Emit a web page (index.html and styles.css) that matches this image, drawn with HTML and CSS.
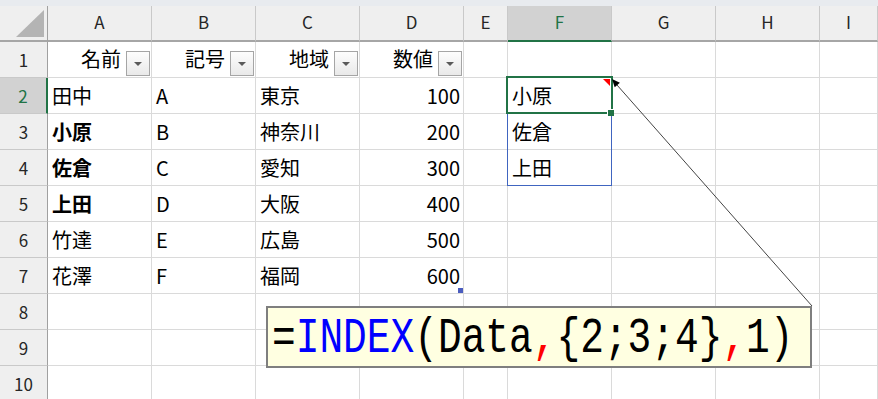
FILE: index.html
```html
<!DOCTYPE html>
<html lang="ja">
<head>
    <meta charset="UTF-8">
    <meta name="viewport" content="width=device-width, initial-scale=1.0">
    <title>INDEX スピル</title>
    <link rel="stylesheet" href="styles.css">
</head>
<body>
    <div class="topbar"></div>
    <div class="sheet">
        <div class="grid">
            <!-- column headers -->
            <div class="corner"><span class="corner-tri"></span></div>
            <div class="colhead">A</div>
            <div class="colhead">B</div>
            <div class="colhead">C</div>
            <div class="colhead">D</div>
            <div class="colhead">E</div>
            <div class="colhead selected">F</div>
            <div class="colhead">G</div>
            <div class="colhead">H</div>
            <div class="colhead">I</div>

            <!-- row 1: table headers with filter buttons -->
            <div class="rowhead">1</div>
            <div class="cell th"><span>名前</span><span class="filter"></span></div>
            <div class="cell th"><span>記号</span><span class="filter"></span></div>
            <div class="cell th"><span>地域</span><span class="filter"></span></div>
            <div class="cell th"><span>数値</span><span class="filter"></span></div>
            <div class="cell"></div>
            <div class="cell"></div>
            <div class="cell"></div>
            <div class="cell"></div>
            <div class="cell"></div>

            <div class="rowhead selected">2</div>
            <div class="cell">田中</div>
            <div class="cell">A</div>
            <div class="cell">東京</div>
            <div class="cell num">100</div>
            <div class="cell"></div>
            <div class="cell">小原</div>
            <div class="cell"></div>
            <div class="cell"></div>
            <div class="cell"></div>

            <div class="rowhead">3</div>
            <div class="cell bold">小原</div>
            <div class="cell">B</div>
            <div class="cell">神奈川</div>
            <div class="cell num">200</div>
            <div class="cell"></div>
            <div class="cell">佐倉</div>
            <div class="cell"></div>
            <div class="cell"></div>
            <div class="cell"></div>

            <div class="rowhead">4</div>
            <div class="cell bold">佐倉</div>
            <div class="cell">C</div>
            <div class="cell">愛知</div>
            <div class="cell num">300</div>
            <div class="cell"></div>
            <div class="cell">上田</div>
            <div class="cell"></div>
            <div class="cell"></div>
            <div class="cell"></div>

            <div class="rowhead">5</div>
            <div class="cell bold">上田</div>
            <div class="cell">D</div>
            <div class="cell">大阪</div>
            <div class="cell num">400</div>
            <div class="cell"></div>
            <div class="cell"></div>
            <div class="cell"></div>
            <div class="cell"></div>
            <div class="cell"></div>

            <div class="rowhead">6</div>
            <div class="cell">竹達</div>
            <div class="cell">E</div>
            <div class="cell">広島</div>
            <div class="cell num">500</div>
            <div class="cell"></div>
            <div class="cell"></div>
            <div class="cell"></div>
            <div class="cell"></div>
            <div class="cell"></div>

            <div class="rowhead">7</div>
            <div class="cell">花澤</div>
            <div class="cell">F</div>
            <div class="cell">福岡</div>
            <div class="cell num">600</div>
            <div class="cell"></div>
            <div class="cell"></div>
            <div class="cell"></div>
            <div class="cell"></div>
            <div class="cell"></div>

            <div class="rowhead">8</div>
            <div class="cell"></div>
            <div class="cell"></div>
            <div class="cell"></div>
            <div class="cell"></div>
            <div class="cell"></div>
            <div class="cell"></div>
            <div class="cell"></div>
            <div class="cell"></div>
            <div class="cell"></div>

            <div class="rowhead">9</div>
            <div class="cell"></div>
            <div class="cell"></div>
            <div class="cell"></div>
            <div class="cell"></div>
            <div class="cell"></div>
            <div class="cell"></div>
            <div class="cell"></div>
            <div class="cell"></div>
            <div class="cell"></div>

            <div class="rowhead">10</div>
            <div class="cell"></div>
            <div class="cell"></div>
            <div class="cell"></div>
            <div class="cell"></div>
            <div class="cell"></div>
            <div class="cell"></div>
            <div class="cell"></div>
            <div class="cell"></div>
            <div class="cell"></div>
        </div>

        <!-- spill range F2:F4 and the active cell F2 -->
        <div class="spill"></div>
        <div class="active"></div>
        <span class="note-mark"></span>
        <span class="fill-handle"></span>
        <span class="table-handle"></span>

        <svg class="callout" width="878" height="393" viewBox="0 0 878 393">
            <line x1="617" y1="79" x2="812" y2="300" stroke="#444" stroke-width="1"/>
            <polygon points="612,73 614.7,81.3 619.9,76.7" fill="#000"/>
        </svg>

        <div class="formula-note">
            <span class="formula">=<span class="fn">INDEX</span>(Data<span class="sep">,</span>{2;3;4}<span class="sep">,</span>1)</span>
        </div>
    </div>
</body>
</html>
```

FILE: styles.css
```css
body {
    margin: 0;
    padding: 0;
    width: 878px;
    height: 399px;
    overflow: hidden;
    background-color: #fff;
    font-family: "Noto Sans CJK JP", "Noto Sans", sans-serif;
    color: #000;
}
.topbar {
    height: 6px;
    background-color: #e8ebef;
}
.sheet {
    position: relative;
}
.grid {
    display: grid;
    grid-template-columns: 48px repeat(4, 104px) 44px repeat(3, 104px) 1fr;
    grid-template-rows: repeat(11, 36px);
}

/* headers */
.corner,
.colhead,
.rowhead {
    box-sizing: border-box;
    background-color: #efefef;
    color: #262626;
    font-size: 17px;
    display: flex;
    justify-content: center;
}
.corner {
    position: relative;
    border-right: 1px solid #a0a0a0;
    border-bottom: 2px solid #a6a6a6;
}
.corner-tri {
    position: absolute;
    left: 16px;
    top: 4px;
    width: 28px;
    height: 27px;
    background-color: #b4b4b4;
    clip-path: polygon(100% 0, 100% 100%, 0 100%);
}
.colhead {
    align-items: flex-start;
    padding-top: 3px;
    border-right: 1px solid #c9c9c9;
    border-bottom: 2px solid #a6a6a6;
}
.colhead.selected {
    background-color: #d2d2d2;
    color: #217346;
    border-bottom-color: #217346;
}
.rowhead {
    align-items: center;
    border-right: 1px solid #a0a0a0;
    border-bottom: 1px solid #c9c9c9;
}
.rowhead.selected {
    background-color: #d2d2d2;
    color: #217346;
    border-right: 2px solid #217346;
}

/* cells */
.cell {
    box-sizing: border-box;
    border-right: 1px solid #dadada;
    border-bottom: 1px solid #dadada;
    font-size: 20px;
    display: flex;
    align-items: center;
    padding: 0 4px;
    white-space: nowrap;
}
.cell.num {
    justify-content: flex-end;
    padding-right: 3px;
}
.cell.bold {
    font-weight: 700;
}
.cell.th {
    justify-content: flex-end;
    align-items: flex-end;
    padding: 0 1px 1px 0;
}
.cell.th span:first-child {
    align-self: center;
    margin-right: 5px;
    margin-top: -1px;
}
.filter {
    position: relative;
    box-sizing: border-box;
    width: 24px;
    height: 25px;
    border: 1px solid #a5a5a5;
    background: linear-gradient(#fdfdfd, #e9e9e9);
}
.filter::after {
    content: "";
    position: absolute;
    left: 7px;
    top: 10px;
    border-left: 4px solid transparent;
    border-right: 4px solid transparent;
    border-top: 4px solid #5a5a5a;
}

/* selection overlays */
.spill {
    position: absolute;
    left: 507px;
    top: 71px;
    width: 105px;
    height: 109px;
    box-sizing: border-box;
    border: 1px solid #4065c0;
}
.active {
    position: absolute;
    left: 506px;
    top: 70px;
    width: 107px;
    height: 38px;
    box-sizing: border-box;
    border: 2px solid #217346;
}
.note-mark {
    position: absolute;
    left: 603px;
    top: 73px;
    width: 7px;
    height: 7px;
    background-color: #f00;
    clip-path: polygon(0 0, 100% 0, 100% 100%);
}
.fill-handle {
    position: absolute;
    left: 607px;
    top: 103px;
    width: 7px;
    height: 7px;
    background-color: #217346;
    border-top: 1px solid #fff;
    border-left: 1px solid #fff;
    box-sizing: border-box;
}
.table-handle {
    position: absolute;
    left: 458px;
    top: 282px;
    width: 5px;
    height: 5px;
    background-color: #4a5cbf;
}

/* formula callout */
.callout {
    position: absolute;
    left: 0;
    top: 0;
    pointer-events: none;
}
.formula-note {
    position: absolute;
    left: 266px;
    top: 300px;
    width: 546px;
    height: 62px;
    box-sizing: border-box;
    border: 2px solid #7f7f7f;
    background-color: #ffffe1;
    padding: 3px 0 0 4px;
    overflow: hidden;
}
.formula {
    display: inline-block;
    font-family: "Liberation Mono", monospace;
    font-size: 50px;
    line-height: 56px;
    white-space: nowrap;
    transform: scaleX(0.79);
    transform-origin: left center;
}
.fn {
    color: #0000ff;
}
.sep {
    color: #ff0000;
}
```
